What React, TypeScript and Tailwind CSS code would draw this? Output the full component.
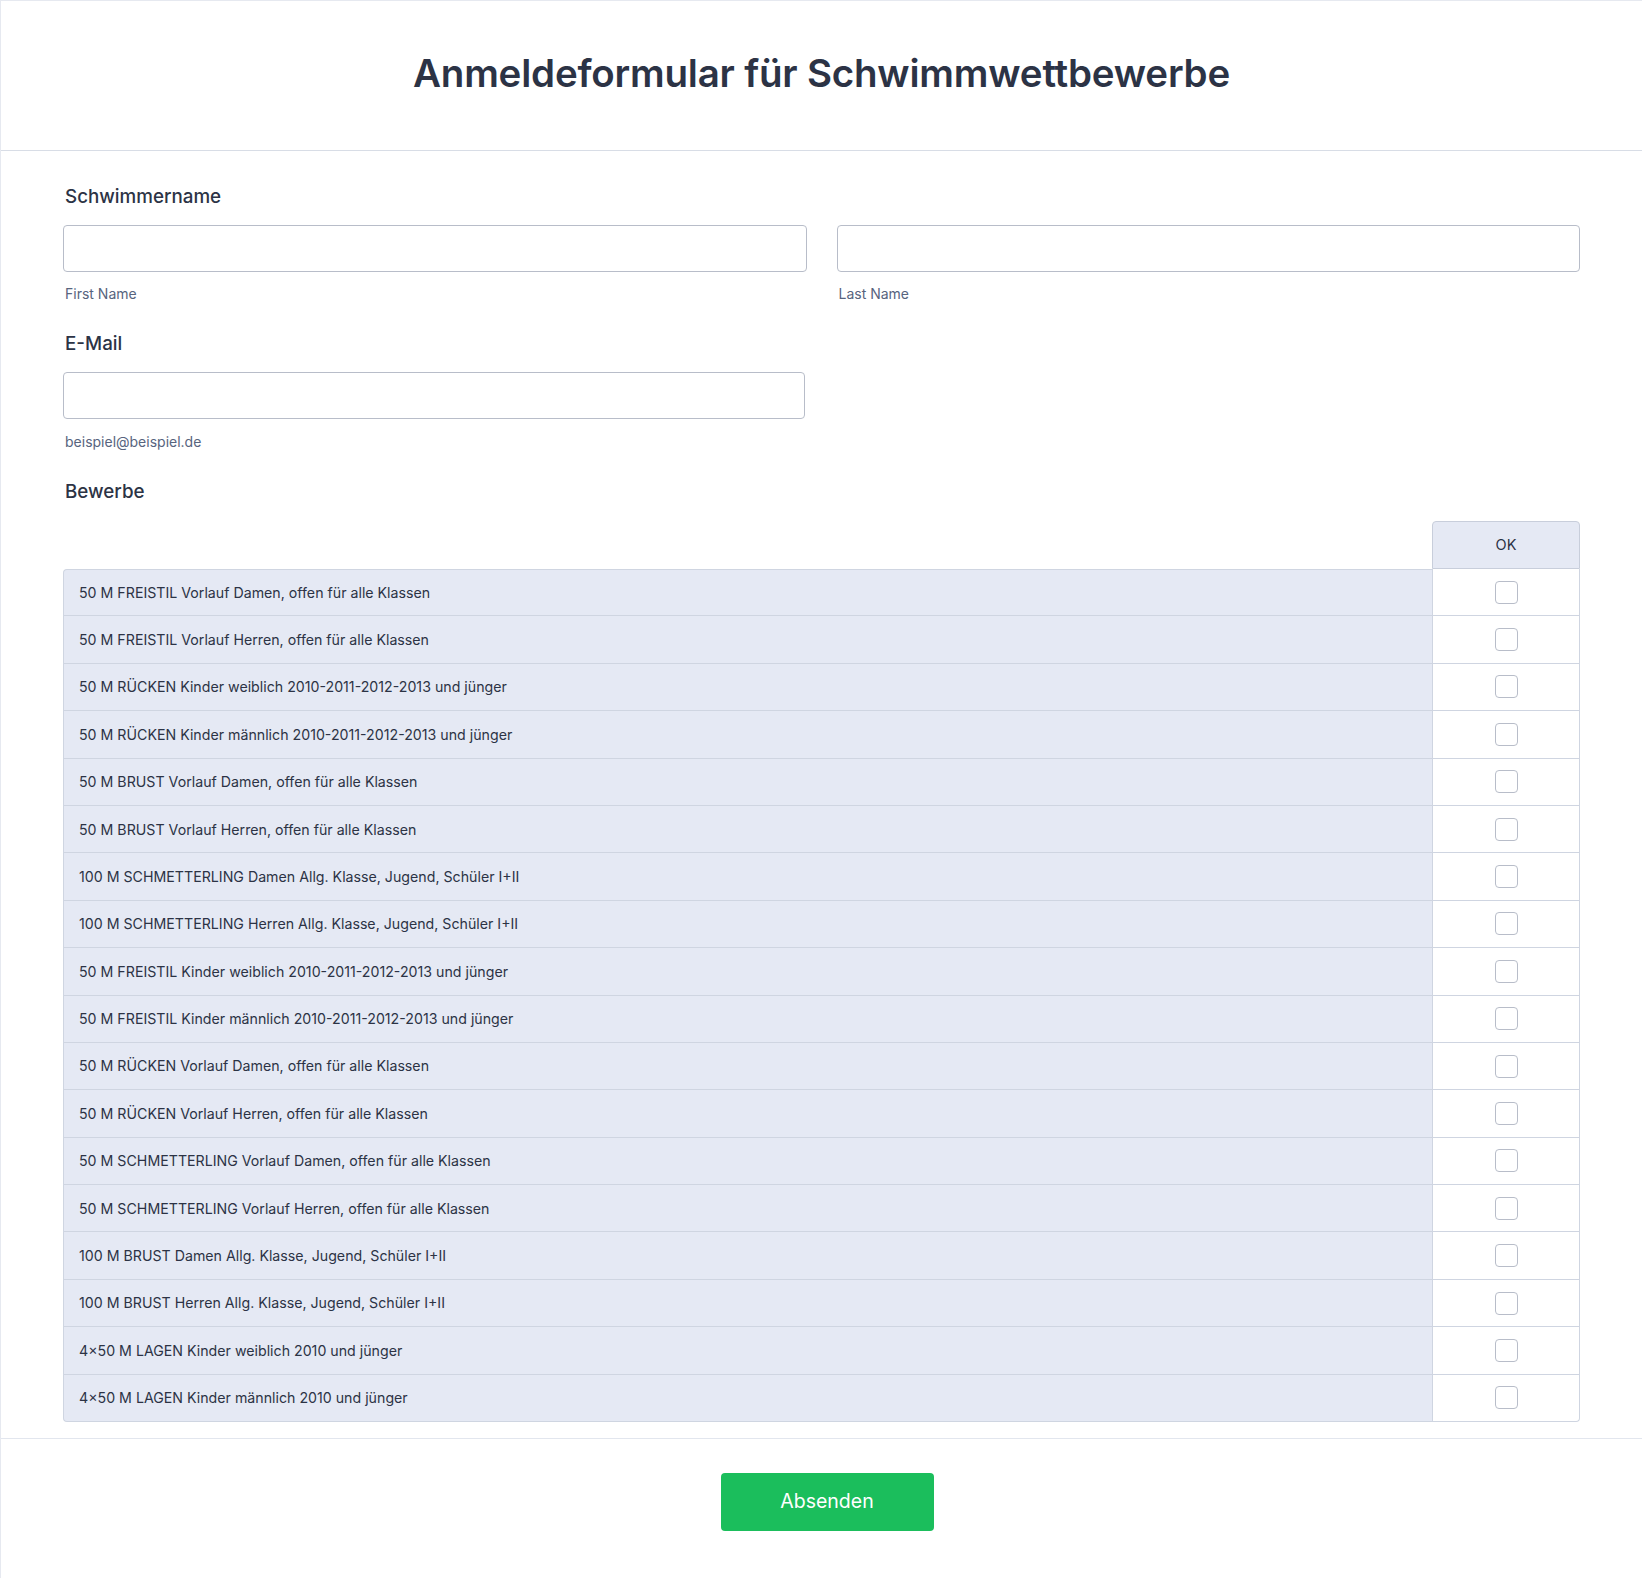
import React from 'react';

const events = [
  '50 M FREISTIL Vorlauf Damen, offen für alle Klassen',
  '50 M FREISTIL Vorlauf Herren, offen für alle Klassen',
  '50 M RÜCKEN Kinder weiblich 2010-2011-2012-2013 und jünger',
  '50 M RÜCKEN Kinder männlich 2010-2011-2012-2013 und jünger',
  '50 M BRUST Vorlauf Damen, offen für alle Klassen',
  '50 M BRUST Vorlauf Herren, offen für alle Klassen',
  '100 M SCHMETTERLING Damen Allg. Klasse, Jugend, Schüler I+II',
  '100 M SCHMETTERLING Herren Allg. Klasse, Jugend, Schüler I+II',
  '50 M FREISTIL Kinder weiblich 2010-2011-2012-2013 und jünger',
  '50 M FREISTIL Kinder männlich 2010-2011-2012-2013 und jünger',
  '50 M RÜCKEN Vorlauf Damen, offen für alle Klassen',
  '50 M RÜCKEN Vorlauf Herren, offen für alle Klassen',
  '50 M SCHMETTERLING Vorlauf Damen, offen für alle Klassen',
  '50 M SCHMETTERLING Vorlauf Herren, offen für alle Klassen',
  '100 M BRUST Damen Allg. Klasse, Jugend, Schüler I+II',
  '100 M BRUST Herren Allg. Klasse, Jugend, Schüler I+II',
  '4×50 M LAGEN Kinder weiblich 2010 und jünger',
  '4×50 M LAGEN Kinder männlich 2010 und jünger',
];

const Label: React.FC<{ children: React.ReactNode }> = ({ children }) => (
  <div className="pl-[2px] text-[18.8px] leading-6 font-medium text-[#2c3345]">{children}</div>
);

const TextInput: React.FC = () => (
  <input
    type="text"
    className="block w-full h-[47px] rounded-[4px] border border-[#b8bdc9] bg-white px-3 outline-none"
  />
);

const SubLabel: React.FC<{ children: React.ReactNode }> = ({ children }) => (
  <div className="pl-[2px] text-[14px] leading-5 text-[#57647e]">{children}</div>
);

const App: React.FC = () => {
  return (
    <div className="min-h-[1578px] w-full bg-white border-l border-t border-[#e6e9f0] font-['Inter','Liberation_Sans',sans-serif]">
      <header className="h-[150px] flex items-center justify-center border-b border-[#d8dde6]">
        <h1 className="text-[38.5px] font-semibold text-[#2c3345] tracking-[-0.2px] -mt-[3px]">
          Anmeldeformular für Schwimmwettbewerbe
        </h1>
      </header>

      <main className="px-[62px] pt-[34px] pb-4">
        <Label>Schwimmername</Label>
        <div className="mt-[16px] grid grid-cols-2 gap-[30px]">
          <div>
            <TextInput />
            <div className="mt-[12px]">
              <SubLabel>First Name</SubLabel>
            </div>
          </div>
          <div>
            <TextInput />
            <div className="mt-[12px]">
              <SubLabel>Last Name</SubLabel>
            </div>
          </div>
        </div>

        <div className="mt-7">
          <Label>E-Mail</Label>
        </div>
        <div className="mt-[16px] w-[742px]">
          <TextInput />
          <div className="mt-[13px]">
            <SubLabel>beispiel@beispiel.de</SubLabel>
          </div>
        </div>

        <div className="mt-[28px]">
          <Label>Bewerbe</Label>
        </div>

        <div className="mt-[17px] grid grid-cols-[1fr_148px]">
          <div />
          <div className="h-[48px] flex items-center justify-center rounded-t-[4px] border border-[#c8cedb] bg-[#e5e9f4] text-[14.5px] text-[#2c3345]">
            OK
          </div>
          {events.map((ev, i) => (
            <React.Fragment key={ev}>
              <div
                className={`h-[47.4px] flex items-center pl-[15px] bg-[#e5e9f4] border-l border-b border-[#cfd5e1] text-[14.2px] text-[#2c3345] ${
                  i === 0 ? 'border-t rounded-tl-[4px]' : ''
                } ${i === events.length - 1 ? 'rounded-bl-[4px]' : ''}`}
              >
                {ev}
              </div>
              <div
                className={`h-[47.4px] flex items-center justify-center bg-white border-l border-r border-b border-[#cfd5e1] ${
                  i === events.length - 1 ? 'rounded-br-[4px]' : ''
                }`}
              >
                <span className="block w-[23px] h-[23px] rounded-[4px] border border-[#b8bdc9] bg-white" />
              </div>
            </React.Fragment>
          ))}
        </div>
      </main>

      <footer className="border-t border-[#e2e6ee] flex justify-center pt-[34px] pb-[40px]">
        <button className="ml-[11px] w-[213px] h-[58px] rounded-[4px] bg-[#1bbe5c] text-white text-[19.5px] font-normal">
          Absenden
        </button>
      </footer>
    </div>
  );
};

export default App;
